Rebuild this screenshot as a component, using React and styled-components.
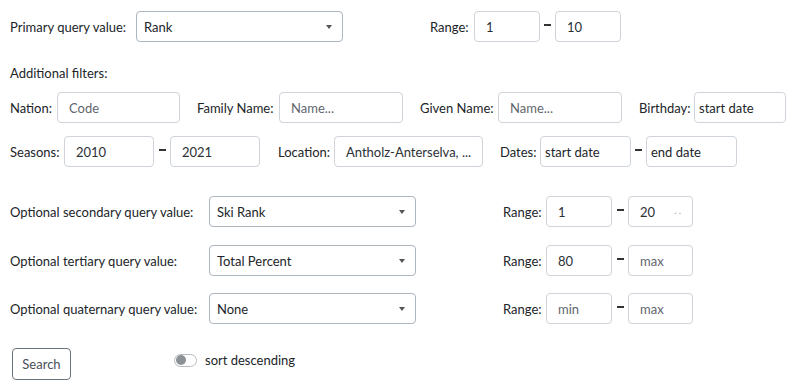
import React from 'react';
import styled, { createGlobalStyle } from 'styled-components';

const GlobalStyle = createGlobalStyle`
  body {
    margin: 0;
    background: #fff;
    color: #212529;
    font-family: Lato, "Open Sans", sans-serif;
    font-size: 13px;
  }
  * { box-sizing: border-box; }
`;

const StyledForm = styled.form`
  padding: 11px 0 0 10px;
  width: 800px;
`;

const Row = styled.div`
  display: flex;
  align-items: center;
  gap: ${(props) => props.$gap || 0}px;
  margin-top: ${(props) => props.$mt || 0}px;
`;

const Field = styled.div`
  display: flex;
  align-items: center;
  flex: none;
`;

const Label = styled.label`
  width: ${(props) => props.$w}px;
  flex: none;
  white-space: nowrap;
  line-height: 18px;
`;

const Heading = styled.div`
  margin-top: 22px;
  line-height: 18px;
`;

const TextInput = styled.input`
  width: ${(props) => props.$w}px;
  height: 31px;
  flex: none;
  border: 1px solid #ced4da;
  border-radius: 4px;
  padding: 0 ${(props) => (props.$compact ? 4 : 11)}px;
  font-family: inherit;
  font-size: 13px;
  color: #2b3035;
  background: #fff;
  outline: none;
  &::placeholder {
    color: ${(props) => (props.$compact ? '#212529' : '#5f666d')};
    opacity: 1;
  }
`;

const InputWrap = styled.div`
  position: relative;
  flex: none;
`;

const Hint = styled.span`
  position: absolute;
  right: 10px;
  top: 8px;
  color: #9aa0a6;
  font-size: 10px;
  letter-spacing: 2px;
`;

const SelectWrap = styled.div`
  position: relative;
  flex: none;
  &::after {
    content: '';
    position: absolute;
    right: 11px;
    top: 14px;
    border-left: 3px solid transparent;
    border-right: 3px solid transparent;
    border-top: 4px solid #555;
    pointer-events: none;
  }
`;

const Select = styled.select`
  width: ${(props) => props.$w}px;
  height: 31px;
  border: 1px solid #adb5bd;
  border-radius: 4px;
  padding: 0 20px 0 7px;
  appearance: none;
  font-family: inherit;
  font-size: 13px;
  color: #212529;
  background: #fff;
  outline: none;
`;

const Dash = styled.span`
  width: ${(props) => props.$w}px;
  flex: none;
  display: flex;
  justify-content: center;
  &::before {
    content: '';
    width: 7px;
    height: 2px;
    margin-top: -3px;
    background: #333;
  }
`;

const Button = styled.button`
  margin-left: 2px;
  width: 59px;
  height: 32px;
  border: 1px solid #6c757d;
  border-radius: 4px;
  background: #fff;
  color: #495057;
  font-family: inherit;
  font-size: 13px;
`;

const Switch = styled.span`
  display: inline-flex;
  align-items: center;
  width: 23px;
  height: 13px;
  padding: 0 1px;
  border: 1px solid #b8bcc0;
  border-radius: 7px;
  flex: none;
  &::before {
    content: '';
    width: 10px;
    height: 10px;
    border-radius: 50%;
    background: #8d9297;
  }
`;

const SwitchField = styled.label`
  display: flex;
  align-items: center;
  gap: 8px;
  margin-left: 103px;
  margin-top: -8px;
`;

const queryRows = [
  { label: 'Optional secondary query value:', value: 'Ski Rank', from: '1', to: '20', hint: true, mt: 29 },
  { label: 'Optional tertiary query value:', value: 'Total Percent', from: '80', to: '', mt: 18 },
  { label: 'Optional quaternary query value:', value: 'None', from: '', to: '', mt: 17 },
];

function QuerySelect({ w, value }) {
  return (
    <SelectWrap>
      <Select $w={w} value={value} onChange={() => {}}>
        <option>{value}</option>
      </Select>
    </SelectWrap>
  );
}

function RangeField({ labelW, w1, dashW, w2, from, to, hint }) {
  return (
    <Field>
      <Label $w={labelW}>Range:</Label>
      <TextInput $w={w1} value={from} placeholder="min" readOnly />
      <Dash $w={dashW} />
      <InputWrap>
        <TextInput $w={w2} value={to} placeholder="max" readOnly />
        {hint && <Hint>..</Hint>}
      </InputWrap>
    </Field>
  );
}

export default function App() {
  return (
    <>
      <GlobalStyle />
      <StyledForm>
        <Row $gap={87}>
          <Field>
            <Label $w={126}>Primary query value:</Label>
            <QuerySelect w={207} value="Rank" />
          </Field>
          <RangeField labelW={44} w1={66} dashW={15} w2={66} from="1" to="10" />
        </Row>

        <Heading>Additional filters:</Heading>

        <Row $gap={17} $mt={10}>
          <Field>
            <Label $w={47}>Nation:</Label>
            <TextInput $w={123} placeholder="Code" />
          </Field>
          <Field>
            <Label $w={82}>Family Name:</Label>
            <TextInput $w={124} placeholder="Name..." />
          </Field>
          <Field>
            <Label $w={78}>Given Name:</Label>
            <TextInput $w={124} placeholder="Name..." />
          </Field>
          <Field>
            <Label $w={55}>Birthday:</Label>
            <TextInput $w={92} $compact placeholder="start date" />
          </Field>
        </Row>

        <Row $gap={17} $mt={13}>
          <Field>
            <Label $w={54}>Seasons:</Label>
            <TextInput $w={90} value="2010" readOnly />
            <Dash $w={16} />
            <TextInput $w={90} value="2021" readOnly />
          </Field>
          <Field style={{ marginLeft: 1 }}>
            <Label $w={56}>Location:</Label>
            <TextInput $w={149} value="Antholz-Anterselva, ..." readOnly />
          </Field>
          <Field>
            <Label $w={40}>Dates:</Label>
            <TextInput $w={91} $compact placeholder="start date" />
            <Dash $w={15} />
            <TextInput $w={91} $compact placeholder="end date" />
          </Field>
        </Row>

        {queryRows.map((row) => (
          <Row key={row.label} $gap={87} $mt={row.mt}>
            <Field>
              <Label $w={199}>{row.label}</Label>
              <QuerySelect w={207} value={row.value} />
            </Field>
            <RangeField
              labelW={43}
              w1={66}
              dashW={16}
              w2={65}
              from={row.from}
              to={row.to}
              hint={row.hint}
            />
          </Row>
        ))}

        <Row $mt={24}>
          <Button type="button">Search</Button>
          <SwitchField>
            <Switch />
            sort descending
          </SwitchField>
        </Row>
      </StyledForm>
    </>
  );
}
